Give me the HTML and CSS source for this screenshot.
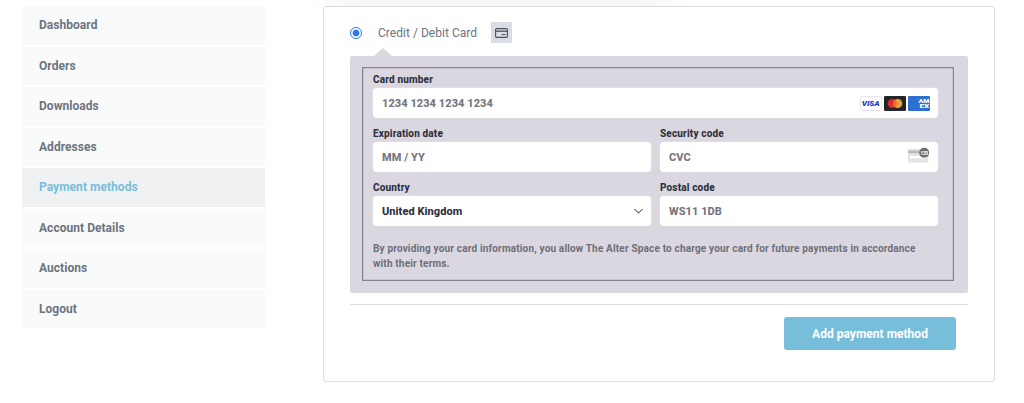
FILE: index.html
```html
<!DOCTYPE html>
<html lang="en">
<head>
<meta charset="UTF-8">
<title>Add payment method</title>
<link rel="stylesheet" href="styles.css">
</head>
<body>
<div class="account">
  <nav class="account-nav">
    <a href="#">Dashboard</a>
    <a href="#">Orders</a>
    <a href="#">Downloads</a>
    <a href="#">Addresses</a>
    <a href="#" class="is-active">Payment methods</a>
    <a href="#">Account Details</a>
    <a href="#">Auctions</a>
    <a href="#">Logout</a>
  </nav>

  <main class="account-content">
    <form class="payment">
      <label class="method">
        <input type="radio" name="payment_method" class="method-radio" checked>
        <span class="method-name">Credit / Debit Card</span>
        <span class="method-icon">
          <svg width="13" height="10" viewBox="0 0 13 10" fill="none" stroke="#4c505e">
            <rect x=".6" y=".6" width="11.8" height="8.8" rx="1.2" stroke-width="1.1"/>
            <path d="M.6 3.2h11.8" stroke-width="1.3"/>
            <path d="M6.5 6.6h4" stroke-width="1"/>
          </svg>
        </span>
      </label>

      <div class="payment-box">
        <fieldset class="card-form">
          <div class="field field-wide">
            <label for="number">Card number</label>
            <div class="control">
              <input id="number" type="text" placeholder="1234 1234 1234 1234">
              <div class="brands">
                <svg width="22" height="15" viewBox="0 0 22 15">
                  <rect x=".5" y=".5" width="21" height="14" rx="1.2" fill="#fff" stroke="#e4e4ea"/>
                  <text x="10.7" y="10.4" class="visa" textLength="18" lengthAdjust="spacingAndGlyphs">VISA</text>
                </svg>
                <svg width="22" height="15" viewBox="0 0 22 15">
                  <rect width="22" height="15" rx="1.3" fill="#252525"/>
                  <circle cx="8.3" cy="7.5" r="4.6" fill="#dc2b2b"/>
                  <circle cx="13.7" cy="7.5" r="4.6" fill="#e9a03b"/>
                  <path d="M11 3.8a4.6 4.6 0 0 1 0 7.4a4.6 4.6 0 0 1 0-7.4" fill="#ec6a2c"/>
                </svg>
                <svg width="22" height="15" viewBox="0 0 22 15">
                  <rect width="22" height="15" rx="1.3" fill="#2f6fd0"/>
                  <text x="10.6" y="7.2" class="amex" textLength="10.8" lengthAdjust="spacingAndGlyphs">AM</text>
                  <text x="11.5" y="12.4" class="amex" textLength="9.8" lengthAdjust="spacingAndGlyphs">EX</text>
                </svg>
              </div>
            </div>
          </div>
          <div class="field">
            <label for="expiry">Expiration date</label>
            <div class="control"><input id="expiry" type="text" placeholder="MM / YY"></div>
          </div>
          <div class="field">
            <label for="cvc">Security code</label>
            <div class="control">
              <input id="cvc" type="text" placeholder="CVC">
              <svg class="cvc-icon" width="22" height="16" viewBox="0 0 22 16">
                <rect y="2" width="20.5" height="13.5" rx="1.5" fill="#e3e3e6"/>
                <path d="M0 3.6h20v2.6H0z" fill="#b9b9bd"/>
                <path d="M2 9h17v2.4H2z" fill="#fff"/>
                <circle cx="16.2" cy="5.8" r="5" fill="#6b6b74"/>
                <text x="16.2" y="8" class="cvc-digits" textLength="7.5" lengthAdjust="spacingAndGlyphs">135</text>
              </svg>
            </div>
          </div>
          <div class="field">
            <label for="country">Country</label>
            <div class="control">
              <select id="country"><option>United Kingdom</option></select>
              <svg class="chevron" width="9" height="6" viewBox="0 0 9 6" fill="none" stroke="#6a6a72" stroke-width="1.1" stroke-linecap="round">
                <path d="M.8 1.3l3.7 3.7L8.2 1.3"/>
              </svg>
            </div>
          </div>
          <div class="field">
            <label for="postcode">Postal code</label>
            <div class="control"><input id="postcode" type="text" placeholder="WS11 1DB"></div>
          </div>
          <p class="terms">By providing your card information, you allow The Alter Space to charge your card for future payments in accordance with their terms.</p>
        </fieldset>
      </div>

      <div class="actions">
        <button type="button">Add payment method</button>
      </div>
    </form>
  </main>
</div>
</body>
</html>
```
FILE: styles.css
```css
* {
    box-sizing: border-box;
}
body {
    margin: 0;
    height: 403px;
    overflow: hidden;
    background: #fff;
    color: #6d7381;
    font-family: Roboto, "Liberation Sans", sans-serif;
}
.account {
    display: flex;
    align-items: flex-start;
    gap: 58px;
    padding: 6px 29px 0 22px;
    background: linear-gradient(90deg, #fff, #f6f6f7 50px, #f6f6f7 330px, #fff) 310px 0 / 385px 6px no-repeat;
}

/* side menu */
.account-nav {
    display: flex;
    flex-direction: column;
    gap: 2px;
    width: 243px;
}
.account-nav a {
    height: 38.5px;
    padding-left: 17px;
    background: #f9fbfa;
    color: #6d7381;
    font-size: 12px;
    font-weight: 700;
    line-height: 39px;
    letter-spacing: 0.04px;
    text-decoration: none;
}
.account-nav a.is-active {
    background: #f0f1f3;
    color: #77bedb;
}

/* payment panel */
.account-content {
    flex: 1;
    height: 376px;
    padding: 14px 26px 0;
    background: #fff;
    border: 1px solid #dcdddf;
    border-radius: 3px;
}
.method {
    display: flex;
    align-items: center;
    height: 23px;
}
.method-radio {
    appearance: none;
    width: 12px;
    height: 12px;
    margin: 1px 16px 0 0;
    border: 1px solid #2f76f6;
    border-radius: 50%;
    background: radial-gradient(circle, #2f76f6 3.1px, #fff 3.7px);
}
.method-name {
    font-size: 12px;
    letter-spacing: 0.03px;
}
.method-icon {
    display: flex;
    align-items: center;
    justify-content: center;
    width: 21px;
    height: 21px;
    margin-left: 14px;
    background: #d8dee3;
}
.payment-box {
    position: relative;
    height: 237px;
    margin-top: 12px;
    padding: 11px 14px 12px 12px;
    background: #dad7e0;
    border-radius: 2px;
}
.payment-box::before {
    content: "";
    position: absolute;
    top: -8px;
    left: 24px;
    border: solid transparent;
    border-width: 0 9px 8px;
    border-bottom-color: #dad7e0;
}
.card-form {
    display: grid;
    grid-template-columns: 1fr 1fr;
    align-content: start;
    gap: 9px;
    height: 214px;
    margin: 0;
    padding: 5px 15px 0 10px;
    border: 1px solid #86848a;
    box-shadow: inset 0 0 0 0.5px #b5b2b9;
}
.field-wide,
.terms {
    grid-column: 1 / -1;
}
.field label {
    display: block;
    height: 15px;
    color: #30313d;
    font-size: 10px;
    font-weight: 800;
    line-height: 13px;
    letter-spacing: 0.16px;
}
.control {
    display: flex;
    align-items: center;
    height: 30px;
    padding: 0 8px 0 9px;
    background: #fff;
    border-radius: 4px;
    box-shadow: 0 0 0 0.5px #e6e6e6, 0 1px 2px rgba(0, 0, 0, 0.05);
}
.control input,
.control select {
    flex: 1;
    min-width: 0;
    padding: 0;
    border: 0;
    outline: 0;
    background: none;
    appearance: none;
    color: #30313d;
    font: 800 11px Roboto, "Liberation Sans", sans-serif;
    letter-spacing: 0.06px;
}
.control input::placeholder {
    color: #757680;
}
.brands {
    display: flex;
    gap: 2px;
}
.visa,
.amex,
.cvc-digits {
    font-family: Roboto, "Liberation Sans", sans-serif;
    font-weight: 900;
    text-anchor: middle;
}
.visa {
    fill: #2438c8;
    font-size: 8px;
    font-style: italic;
}
.amex {
    fill: #fff;
    font-size: 6px;
    text-anchor: start;
}
.cvc-digits {
    fill: #fff;
    font-size: 6px;
}
.cvc-icon {
    margin-top: -5px;
}
.terms {
    margin: 6px 0 0;
    padding-right: 15px;
    color: #6d6e78;
    font-size: 10px;
    font-weight: 700;
    line-height: 15px;
    letter-spacing: 0.17px;
}
.actions {
    display: flex;
    justify-content: flex-end;
    margin-top: 11px;
    padding: 12px 12px 0 0;
    border-top: 1px solid #dfdfe2;
}
.actions button {
    width: 172px;
    height: 33px;
    padding: 0;
    border: 0;
    border-radius: 3px;
    background: #77bedb;
    color: #fff;
    font: 700 12px Roboto, "Liberation Sans", sans-serif;
    letter-spacing: 0.02px;
}
```
